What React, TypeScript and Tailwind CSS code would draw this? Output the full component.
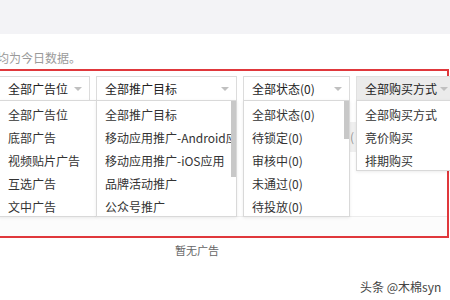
import React from "react";

const font = { fontFamily: '"Microsoft YaHei","Noto Sans CJK SC","Noto Sans",sans-serif' };

function Caret() {
  return (
    <span className="w-0 h-0 border-l-[4px] border-r-[4px] border-t-[4px] border-l-transparent border-r-transparent border-t-[#c0c0c0]" />
  );
}

function Select({ label, className }: { label: string; className: string }) {
  return (
    <div className={"shrink-0 h-[25px] flex items-center justify-between pl-[8px] pr-[7px] text-[12px] text-[#222] border border-[#dcdcdc] " + className}>
      <span className="whitespace-nowrap">{label}</span>
      <Caret />
    </div>
  );
}

function Menu({ items, className, thumb }: { items: string[]; className: string; thumb?: string }) {
  return (
    <div className={"absolute bg-white border border-[#d9d9d9] shadow-[0_1px_3px_rgba(0,0,0,0.08)] overflow-hidden " + className}>
      <div className="flex flex-col pt-[2px]">
        {items.map((t) => (
          <div key={t} className="h-[23px] flex items-center pl-[8px] text-[12px] text-[#333] whitespace-nowrap">
            {t}
          </div>
        ))}
      </div>
      {thumb && <div className={"absolute right-0 top-0 w-[5px] bg-[#c8c8c8] " + thumb} />}
    </div>
  );
}

export default function App() {
  return (
    <div className="relative w-[450px] h-[300px] overflow-hidden bg-white" style={font}>
      <div className="h-[34px] bg-[#f3f3f6]" />
      <div className="h-[35px] flex items-end pb-[2px] text-[12px] text-[#9a9a9a] -ml-[3px]">均为今日数据。</div>
      <div className="relative -ml-[3px] w-[452px] h-[169px] border-2 border-[#e0383c] bg-white">
        <div className="flex items-start pt-[5px] pl-[1px]">
          <Select label="全部广告位" className="w-[90px] border-l-0 mr-[6px]" />
          <Select label="全部推广目标" className="w-[141px] mr-[6px]" />
          <Select label="全部状态(0)" className="w-[107px] mr-[6px]" />
          <Select label="全部购买方式" className="w-[100px] bg-[#ebebeb] border-[#e0e0e0]" />
        </div>
        <div className="absolute left-0 right-0 top-[145px] h-[20px] border-t border-[#ececec] bg-[#fcfcfc]" />
      </div>
      <div className="h-[61px] flex flex-col">
        <div className="pl-[175px] pt-[4px] text-[11px] text-[#666]">暂无广告</div>
        <div className="pl-[360px] pt-[19px] text-[12px] text-[#444]">
          头条 @木棉syn
        </div>
      </div>

      <div className="absolute left-[350px] top-[122px] w-[8px] h-[30px] bg-[#f0f0f0] text-[12px] text-[#999] leading-[30px]">(</div>

      <Menu
        className="left-[-1px] top-[100px] w-[98px] h-[117px]"
        items={["全部广告位", "底部广告", "视频贴片广告", "互选广告", "文中广告"]}
      />
      <Menu
        className="left-[96px] top-[100px] w-[141px] h-[117px] pr-[5px]"
        thumb="h-[76px]"
        items={["全部推广目标", "移动应用推广-Android应用", "移动应用推广-iOS应用", "品牌活动推广", "公众号推广"]}
      />
      <Menu
        className="left-[243px] top-[100px] w-[107px] h-[117px]"
        thumb="h-[38px]"
        items={["全部状态(0)", "待锁定(0)", "审核中(0)", "未通过(0)", "待投放(0)"]}
      />
      <Menu
        className="left-[356px] top-[100px] w-[96px] h-[71px]"
        items={["全部购买方式", "竞价购买", "排期购买"]}
      />
    </div>
  );
}
